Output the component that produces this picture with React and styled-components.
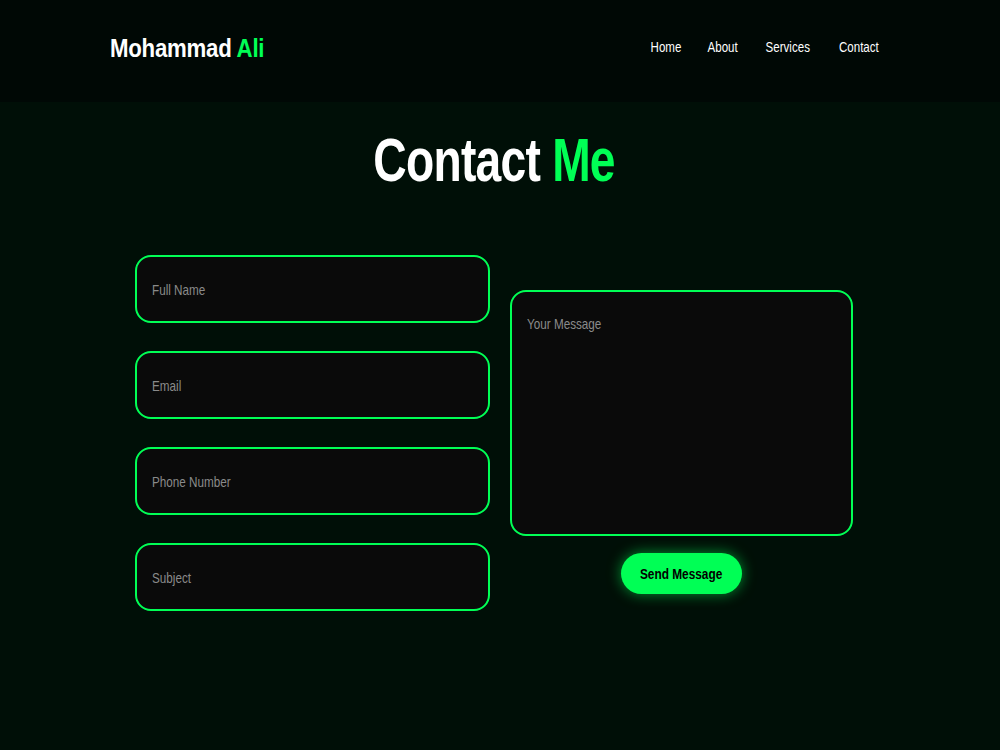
import React from 'react';
import styled, { createGlobalStyle } from 'styled-components';

const GREEN = '#00ff55';
const FONT = '"Liberation Sans", Arial, sans-serif';

const Global = createGlobalStyle`
  * { box-sizing: border-box; }
  body {
    margin: 0;
    background: #000f07;
    font-family: ${FONT};
    color: #fff;
  }
`;

// the design uses a narrow face, so text is squeezed horizontally
const Squeeze = styled.span`
  display: inline-block;
  white-space: nowrap;
  transform: scaleX(${(p) => p.$x || 0.77});
  transform-origin: ${(p) => p.$origin || 'center'};
`;

const Header = styled.header`
  height: 102px;
  background: #000805;
  display: flex;
  align-items: center;
  justify-content: space-between;
  padding: 0 115px 0 110px;
`;

const Logo = styled.div`
  font-weight: 700;
  font-size: 25px;
  letter-spacing: -0.3px;
  margin-top: -6px;
  span span { color: ${GREEN}; }
`;

const Nav = styled.nav`
  display: flex;
  gap: 17px;
  margin-top: -10px;
`;

const NavLink = styled.a`
  color: #fff;
  text-decoration: none;
  font-size: 15px;
`;

const Title = styled.h1`
  margin: 22px 0 0;
  text-align: center;
  font-size: 62px;
  font-weight: 700;
  letter-spacing: -1px;
  padding-right: 12px;
  span span { color: ${GREEN}; }
`;

const Form = styled.form`
  display: flex;
  align-items: center;
  gap: 20px;
  padding: 0 0 0 135px;
  margin-top: 60px;
`;

const LeftCol = styled.div`
  display: flex;
  flex-direction: column;
  gap: 28px;
  width: 355px;
`;

const RightCol = styled.div`
  display: flex;
  flex-direction: column;
  align-items: center;
  gap: 17px;
  width: 343px;
  margin-top: 17px;
`;

const Field = styled.label`
  position: relative;
  display: block;
  width: 100%;
`;

const fieldStyle = `
  display: block;
  width: 100%;
  background: #0a0a0a;
  border: 2px solid ${GREEN};
  border-radius: 16px;
  color: #fff;
  font-family: ${FONT};
  font-size: 15px;
  padding: 0 16px;
  outline: none;
`;

const Input = styled.input`
  ${fieldStyle}
  height: 68px;
`;

const TextArea = styled.textarea`
  ${fieldStyle}
  height: 246px;
  padding-top: 24px;
  resize: none;
`;

// placeholder label laid over the empty field
const Hint = styled.span`
  position: absolute;
  left: 17px;
  top: ${(p) => (p.$top ? '25px' : '50%')};
  transform: ${(p) => (p.$top ? '' : 'translateY(-50%)')} scaleX(0.78);
  transform-origin: left center;
  color: #8a8a8a;
  font-size: 15px;
  white-space: nowrap;
  pointer-events: none;
  input:not(:placeholder-shown) + &,
  textarea:not(:placeholder-shown) + & { display: none; }
`;

const Button = styled.button`
  background: ${GREEN};
  color: #000;
  border: none;
  border-radius: 21px;
  height: 41px;
  width: 121px;
  padding: 0;
  font-family: ${FONT};
  font-weight: 700;
  font-size: 15px;
  box-shadow: 0 0 14px rgba(0, 255, 85, 0.55);
  cursor: pointer;
`;

const fields = ['Full Name', 'Email', 'Phone Number', 'Subject'];
const links = ['Home', 'About', 'Services', 'Contact'];

export default function App() {
  return (
    <>
      <Global />
      <Header>
        <Logo>
          <Squeeze $x={0.89} $origin="left">Mohammad <span>Ali</span></Squeeze>
        </Logo>
        <Nav>
          {links.map((l) => (
            <NavLink href="#" key={l}>
              <Squeeze>{l}</Squeeze>
            </NavLink>
          ))}
        </Nav>
      </Header>
      <Title>
        <Squeeze $x={0.745}>Contact <span>Me</span></Squeeze>
      </Title>
      <Form onSubmit={(e) => e.preventDefault()}>
        <LeftCol>
          {fields.map((f) => (
            <Field key={f}>
              <Input placeholder=" " aria-label={f} />
              <Hint>{f}</Hint>
            </Field>
          ))}
        </LeftCol>
        <RightCol>
          <Field>
            <TextArea placeholder=" " aria-label="Your Message" />
            <Hint $top>Your Message</Hint>
          </Field>
          <Button type="submit">
            <Squeeze $x={0.79}>Send Message</Squeeze>
          </Button>
        </RightCol>
      </Form>
    </>
  );
}
